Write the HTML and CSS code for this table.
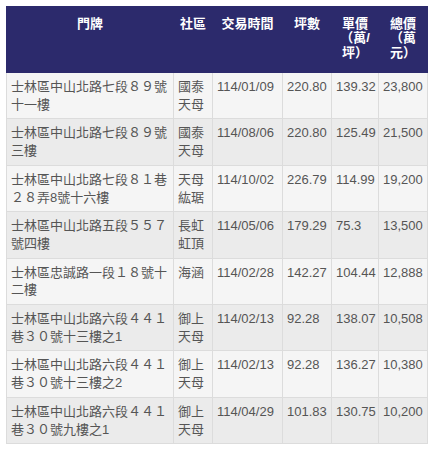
FILE: index.html
```html
<!DOCTYPE html>
<html lang="zh-Hant">
<head>
<meta charset="utf-8">
<title>成交紀錄</title>
<link rel="stylesheet" href="styles.css">
</head>
<body>
<table class="deals">
  <colgroup>
    <col class="c-addr"><col class="c-comm"><col class="c-date"><col class="c-area"><col class="c-unit"><col class="c-total">
  </colgroup>
  <thead>
    <tr>
      <th>門牌</th><th>社區</th><th>交易時間</th><th>坪數</th><th>單價（萬/坪）</th><th>總價（萬元）</th>
    </tr>
  </thead>
  <tbody>
    <tr><td>士林區中山北路七段８９號十一樓</td><td>國泰天母</td><td class="num">114/01/09</td><td class="num">220.80</td><td class="num">139.32</td><td class="num">23,800</td></tr>
    <tr><td>士林區中山北路七段８９號三樓</td><td>國泰天母</td><td class="num">114/08/06</td><td class="num">220.80</td><td class="num">125.49</td><td class="num">21,500</td></tr>
    <tr><td>士林區中山北路七段８１巷２８弄8號十六樓</td><td>天母紘琚</td><td class="num">114/10/02</td><td class="num">226.79</td><td class="num">114.99</td><td class="num">19,200</td></tr>
    <tr><td>士林區中山北路五段５５７號四樓</td><td>長虹虹頂</td><td class="num">114/05/06</td><td class="num">179.29</td><td class="num">75.3</td><td class="num">13,500</td></tr>
    <tr><td>士林區忠誠路一段１８號十二樓</td><td>海涵</td><td class="num">114/02/28</td><td class="num">142.27</td><td class="num">104.44</td><td class="num">12,888</td></tr>
    <tr><td>士林區中山北路六段４４１巷３０號十三樓之1</td><td>御上天母</td><td class="num">114/02/13</td><td class="num">92.28</td><td class="num">138.07</td><td class="num">10,508</td></tr>
    <tr><td>士林區中山北路六段４４１巷３０號十三樓之2</td><td>御上天母</td><td class="num">114/02/13</td><td class="num">92.28</td><td class="num">136.27</td><td class="num">10,380</td></tr>
    <tr><td>士林區中山北路六段４４１巷３０號九樓之1</td><td>御上天母</td><td class="num">114/04/29</td><td class="num">101.83</td><td class="num">130.75</td><td class="num">10,200</td></tr>
  </tbody>
</table>
</body>
</html>
```

FILE: styles.css
```css
html, body {
  margin: 0;
  padding: 0;
  background: #ffffff;
}

body {
  padding: 6px 0 0 6px;
  font-family: "Liberation Sans", "Noto Sans CJK TC", sans-serif;
  font-size: 13px;
  color: #555555;
}

.deals {
  width: 421px;
  table-layout: fixed;
  border-collapse: collapse;
  border: 1px solid #dcdcdc;
}

.c-addr { width: 167px; }
.c-comm { width: 39px; }
.c-date { width: 70px; }
.c-area { width: 49px; }
.c-unit { width: 47px; }
.c-total { width: 49px; }

.deals th {
  background: #2c2a6c;
  color: #ffffff;
  font-weight: bold;
  text-align: center;
  vertical-align: top;
  line-height: 14.5px;
  padding: 9.5px 4px 12px 4px;
  border: 1px solid #2c2a6c;
}

.deals td {
  vertical-align: top;
  text-align: left;
  line-height: 17.7px;
  padding: 5px 4px;
  border: 1px solid #dcdcdc;
}

.deals tbody tr:nth-child(odd) td {
  background: #f5f5f5;
}

.deals tbody tr:nth-child(even) td {
  background: #ebebeb;
}

.deals td.num {
  white-space: nowrap;
}
```
